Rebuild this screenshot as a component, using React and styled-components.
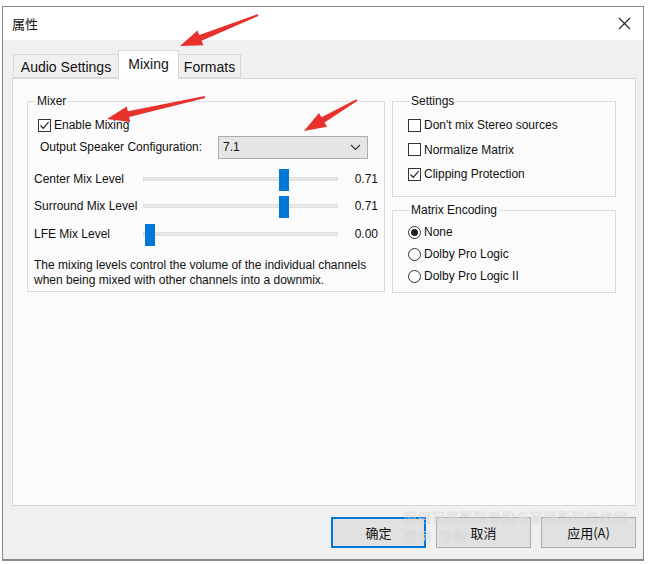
import React from "react";
import styled, { createGlobalStyle } from "styled-components";

const Global = createGlobalStyle`
  html, body { margin: 0; padding: 0; background: #ffffff; }
  body { font-family: "Liberation Sans", "Noto Sans CJK SC", sans-serif; color: #111; }
`;

const Page = styled.div`
  position: relative;
  width: 650px;
  height: 564px;
  overflow: hidden;
`;

const Window = styled.div`
  position: relative;
  margin: 6px 0 0 2px;
  width: 642px;
  height: 555px;
  border: 1px solid #8a8a8a;
  border-bottom-width: 2px;
  box-sizing: border-box;
  background: #f0f0f0;
  display: flex;
  flex-direction: column;
`;

const TitleBar = styled.div`
  height: 33px;
  background: #fff;
  display: flex;
  align-items: center;
  justify-content: space-between;
  padding: 0 12px 0 9px;
  font-family: "Noto Sans CJK SC", sans-serif;
  font-size: 13px;
`;

const Body = styled.div`
  flex: 1;
  padding: 10px 7px 0 9px;
  display: flex;
  flex-direction: column;
`;

const TabRow = styled.div`
  display: flex;
  align-items: flex-end;
  height: 28px;
  padding-left: 1px;
`;

const Tab = styled.div`
  width: ${p => p.$w}px;
  height: ${p => (p.$active ? 29 : 24)}px;
  margin-bottom: ${p => (p.$active ? -1 : 0)}px;
  padding-top: ${p => (p.$active ? 5 : 4)}px;
  box-sizing: border-box;
  text-align: center;
  background: ${p => (p.$active ? "#fff" : "#f0f0f0")};
  border: 1px solid #d9d9d9;
  border-bottom: ${p => (p.$active ? "none" : "1px solid #d9d9d9")};
  margin-left: ${p => (p.$first ? 0 : -1)}px;
  font-size: 14px;
  position: relative;
  z-index: ${p => (p.$active ? 2 : 1)};
`;

const Panel = styled.div`
  width: 624px;
  height: 428px;
  box-sizing: border-box;
  background: #fbfbfb;
  border: 1px solid #d9d9d9;
  padding: 15px 0 0 14px;
  display: flex;
  gap: 7px;
  align-items: flex-start;
  font-size: 12px;
`;

const Group = styled.fieldset`
  margin: 0;
  width: ${p => p.$w}px;
  height: ${p => p.$h}px;
  box-sizing: border-box;
  border: 1px solid #dcdcdc;
  padding: ${p => p.$pad || "0 6px"};
  min-width: 0;
`;

const Legend = styled.legend`
  padding: 0 2px;
  margin-left: 1px;
  font-size: 12px;
  color: #111;
`;

const Column = styled.div`
  display: flex;
  flex-direction: column;
  gap: 6px;
`;

const CheckRow = styled.label`
  display: flex;
  align-items: center;
  gap: 3px;
  height: ${p => p.$h || 24}px;
  padding-left: ${p => p.$indent || 0}px;
  margin-top: ${p => p.$top || 0}px;
`;

const Box = styled.span`
  width: 13px;
  height: 13px;
  box-sizing: border-box;
  border: 1px solid #333;
  background: #fff;
  display: inline-flex;
  align-items: center;
  justify-content: center;
`;

const Radio = styled.span`
  width: 13px;
  height: 13px;
  box-sizing: border-box;
  border: 1px solid #333;
  border-radius: 50%;
  background: #fff;
  display: inline-flex;
  align-items: center;
  justify-content: center;
  &::after {
    content: "";
    width: 7px;
    height: 7px;
    border-radius: 50%;
    background: ${p => (p.$on ? "#222" : "transparent")};
  }
`;

const ConfigRow = styled.div`
  display: flex;
  align-items: center;
  padding-left: 6px;
  margin-top: -1px;
  height: 26px;
`;

const ConfigLabel = styled.span`
  width: 178px;
`;

const Select = styled.div`
  width: 150px;
  height: 23px;
  box-sizing: border-box;
  border: 1px solid #adadad;
  background: #e5e5e5;
  display: flex;
  align-items: center;
  justify-content: space-between;
  padding: 0 6px 0 4px;
`;

const Sliders = styled.div`
  margin-top: 5px;
`;

const SliderRow = styled.div`
  display: flex;
  align-items: center;
  height: 27.5px;
`;

const SliderLabel = styled.span`
  width: 112px;
`;

const Track = styled.div`
  position: relative;
  width: 200px;
  height: 4px;
  background: #e7e7e7;
  border: 1px solid #e0e0e0;
  box-sizing: border-box;
`;

const Thumb = styled.div`
  position: absolute;
  top: -9px;
  width: 10px;
  height: 22px;
  background: #0078d7;
`;

const Value = styled.span`
  width: 34px;
  margin-left: 7px;
  text-align: right;
`;

const Note = styled.p`
  margin: 10px 0 0;
  line-height: 15px;
`;

const Footer = styled.div`
  display: flex;
  justify-content: flex-end;
  gap: 10px;
  padding: 11px 0 0;
`;

const Button = styled.div`
  width: 95px;
  height: 31px;
  box-sizing: border-box;
  border: ${p => (p.$primary ? "2px solid #0078d7" : "1px solid #adadad")};
  background: #e1e1e1;
  display: flex;
  align-items: center;
  justify-content: center;
  font-family: "Noto Sans CJK SC", sans-serif;
  font-size: 13px;
`;

const Watermark = styled.div`
  position: absolute;
  left: 404px;
  top: 507px;
  font-family: "Noto Sans CJK SC", sans-serif;
  font-size: 13px;
  line-height: 19px;
  letter-spacing: 1px;
  color: rgba(255, 255, 255, 0.5);
  text-shadow: 0 0 1px rgba(140, 140, 140, 0.45);
  pointer-events: none;
  white-space: pre;
`;

const Arrows = styled.svg`
  position: absolute;
  left: 0;
  top: 0;
  pointer-events: none;
`;

const Check = () => (
  <svg width="11" height="11" viewBox="0 0 11 11">
    <path d="M1.5 5.5 L4.3 8.3 L9.6 2.2" fill="none" stroke="#222" strokeWidth="1.2" />
  </svg>
);

const arrowPoints = (x1, y1, x2, y2) => {
  const dx = x2 - x1;
  const dy = y2 - y1;
  const len = Math.hypot(dx, dy);
  const ux = dx / len;
  const uy = dy / len;
  const nx = -uy;
  const ny = ux;
  const headLen = 22;
  const bx = x2 - ux * headLen;
  const by = y2 - uy * headLen;
  const pts = [
    [x1 + nx * 1, y1 + ny * 1],
    [bx + nx * 3, by + ny * 3],
    [bx + nx * 8, by + ny * 8],
    [x2, y2],
    [bx - nx * 8, by - ny * 8],
    [bx - nx * 3, by - ny * 3],
    [x1 - nx * 1, y1 - ny * 1]
  ];
  return pts.map(p => p.join(",")).join(" ");
};

const sliders = [
  { label: "Center Mix Level", value: 0.71 },
  { label: "Surround Mix Level", value: 0.71 },
  { label: "LFE Mix Level", value: 0.0 }
];

export default function App() {
  return (
    <Page>
      <Global />
      <Window>
        <TitleBar>
          <span>属性</span>
          <svg width="13" height="13" viewBox="0 0 13 13">
            <path d="M1 1 L12 12 M12 1 L1 12" stroke="#222" strokeWidth="1.1" />
          </svg>
        </TitleBar>
        <Body>
          <TabRow>
            <Tab $first $w={106}>Audio Settings</Tab>
            <Tab $active $w={61}>Mixing</Tab>
            <Tab $w={63}>Formats</Tab>
          </TabRow>
          <Panel>
            <Group $w={358} $h={198}>
              <Legend>Mixer</Legend>
              <CheckRow $h={20} $indent={4} $top={7}>
                <Box><Check /></Box>
                Enable Mixing
              </CheckRow>
              <ConfigRow>
                <ConfigLabel>Output Speaker Configuration:</ConfigLabel>
                <Select>
                  <span>7.1</span>
                  <svg width="11" height="7" viewBox="0 0 11 7">
                    <path d="M1 1 L5.5 5.5 L10 1" fill="none" stroke="#333" strokeWidth="1.1" />
                  </svg>
                </Select>
              </ConfigRow>
              <Sliders>
                {sliders.map(s => (
                  <SliderRow key={s.label}>
                    <SliderLabel>{s.label}</SliderLabel>
                    <Track>
                      <Thumb style={{ left: 1 + s.value * 188 }} />
                    </Track>
                    <Value>{s.value.toFixed(2)}</Value>
                  </SliderRow>
                ))}
              </Sliders>
              <Note>
                The mixing levels control the volume of the individual channels
                <br />
                when being mixed with other channels into a downmix.
              </Note>
            </Group>
            <Column>
              <Group $w={224} $h={103} $pad="0 15px">
                <Legend>Settings</Legend>
                <CheckRow $h={24} $top={5}>
                  <Box />
                  Don't mix Stereo sources
                </CheckRow>
                <CheckRow $h={25}>
                  <Box />
                  Normalize Matrix
                </CheckRow>
                <CheckRow $h={24}>
                  <Box><Check /></Box>
                  Clipping Protection
                </CheckRow>
              </Group>
              <Group $w={224} $h={90} $pad="0 15px">
                <Legend>Matrix Encoding</Legend>
                <CheckRow $h={22} $top={4}>
                  <Radio $on />
                  None
                </CheckRow>
                <CheckRow $h={22}>
                  <Radio />
                  Dolby Pro Logic
                </CheckRow>
                <CheckRow $h={22}>
                  <Radio />
                  Dolby Pro Logic II
                </CheckRow>
              </Group>
            </Column>
          </Panel>
          <Footer>
            <Button $primary>确定</Button>
            <Button>取消</Button>
            <Button>应用(A)</Button>
          </Footer>
        </Body>
      </Window>
      <Watermark>{"阿强家庭影院导购与家庭影院装修网\n案例  导购"}</Watermark>
      <Arrows width="650" height="564" viewBox="0 0 650 564">
        <polygon points={arrowPoints(258, 15, 180, 46)} fill="#e8302c" />
        <polygon points={arrowPoints(205, 97, 107, 119)} fill="#e8302c" />
        <polygon points={arrowPoints(357, 100, 304, 131)} fill="#e8302c" />
      </Arrows>
    </Page>
  );
}
